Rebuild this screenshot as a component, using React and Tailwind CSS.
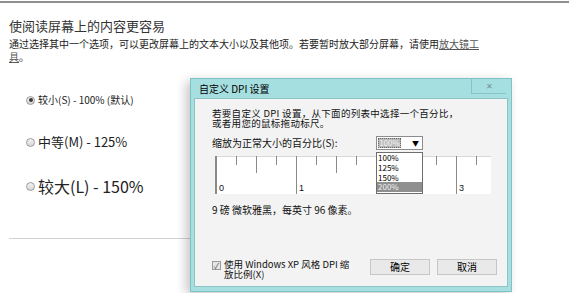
function Radio({ checked }) {
  return (
    <span className="flex h-[9px] w-[9px] shrink-0 items-center justify-center rounded-full border border-[#9a9a9a] bg-gradient-to-b from-[#f4f4f4] to-[#d6d6d6]">
      {checked && <span className="h-[4px] w-[4px] rounded-full bg-[#3a3a3a]" />}
    </span>
  )
}

function Ruler() {
  const ticks = []
  for (let x = 0; x <= 260; x += 20) {
    const len = x % 80 === 0 ? 38 : x % 40 === 0 ? 17 : 9
    ticks.push(<line key={x} x1={x + 0.5} y1="0" x2={x + 0.5} y2={len} stroke="#8a8a8a" strokeWidth="1" />)
  }
  return (
    <svg width="275" height="38" className="block">
      <rect x="0" y="0" width="275" height="38" fill="#ffffff" />
      <line x1="0" y1="0.5" x2="275" y2="0.5" stroke="#d8d8d8" />
      {ticks}
      <text x="3" y="35" fontSize="9" fill="#111" fontFamily="Liberation Sans, sans-serif">0</text>
      <text x="83" y="35" fontSize="9" fill="#111" fontFamily="Liberation Sans, sans-serif">1</text>
      <text x="243" y="35" fontSize="9" fill="#111" fontFamily="Liberation Sans, sans-serif">3</text>
    </svg>
  )
}

function DpiDialog() {
  return (
    <div className="absolute left-[190px] top-[78px] flex h-[214px] w-[322px] flex-col border border-[#7fc2c4] bg-[#a6dfe0] px-[3px] pb-[4px] shadow-[-4px_3px_10px_rgba(0,0,0,0.22)]">
      <div className="relative flex h-[19px] items-center pl-[5px] text-[10px] leading-[12px] text-black">
        自定义 DPI 设置
        <div className="absolute right-[2px] top-[-1px] flex h-[16px] w-[35px] items-center justify-center border-b border-l border-[#86c5c7] text-[8px] text-[#6f9394]">
          ✕
        </div>
      </div>
      <div className="relative flex flex-1 flex-col border border-[#8cc4c6] bg-[#f3f3f3] text-[10px] text-[#111]">
        <p className="pl-[17px] pt-[9px] text-[9.5px] leading-[10px] tracking-[0.3px]">
          若要自定义 DPI 设置，从下面的列表中选择一个百分比，
          <br />
          或者用您的鼠标拖动标尺。
        </p>
        <div className="mt-[8px] flex h-[14px] items-center pl-[17px]">
          <span className="w-[164px] leading-[12px]">缩放为正常大小的百分比(S):</span>
          <div className="flex h-[14px] w-[47px] items-center border border-[#8c8c8c] bg-white">
            <span className="ml-[1px] flex h-[10px] w-[23px] items-center justify-center border border-dotted border-[#666] bg-[#b9b9b9] text-[8px] leading-none text-[#f6f6f6]">
              100%
            </span>
            <span className="ml-auto mr-[3px] text-[7px] leading-none text-black">▼</span>
          </div>
        </div>
        <div className="ml-[20px] mt-[6px] border-l border-[#8a8a8a]">
          <Ruler />
        </div>
        <p className="mt-[10px] pl-[17px] leading-[12px]">9 磅 微软雅黑，每英寸 96 像素。</p>
        <div className="mt-auto flex items-start pb-[7px] pl-[17px] pr-[10px]">
          <span className="mt-[2px] flex h-[9px] w-[9px] shrink-0 items-center justify-center border border-[#9a9a9a] bg-[#e6e6e6] text-[8px] leading-none text-[#555]">
            ✓
          </span>
          <span className="ml-[3px] text-[9.5px] leading-[10px]">
            使用 Windows XP 风格 DPI 缩
            <br />
            放比例(X)
          </span>
          <div className="ml-auto flex gap-[7px]">
            <button className="flex h-[16px] w-[60px] items-center justify-center border border-[#c6c6c6] bg-[#e9e9e9] text-[10px] leading-none text-black">
              确定
            </button>
            <button className="flex h-[16px] w-[60px] items-center justify-center border border-[#c6c6c6] bg-[#e9e9e9] text-[10px] leading-none text-black">
              取消
            </button>
          </div>
        </div>
        <div className="absolute left-[181px] top-[53px] w-[47px] border border-[#6e6e6e] bg-white text-[8px] leading-[10px] text-black">
          <div className="h-[10px] pl-[1px]">100%</div>
          <div className="h-[10px] pl-[1px]">125%</div>
          <div className="h-[9px] pl-[1px] leading-[9px]">150%</div>
          <div className="mb-[1px] h-[10px] bg-[#8f8f8f] pl-[1px] text-[#f2f2f2]">200%</div>
        </div>
      </div>
    </div>
  )
}

export default function App() {
  return (
    <div className="relative h-[293px] w-[569px] overflow-hidden bg-white font-['Noto_Sans_CJK_SC',sans-serif]">
      <div className="mt-[1px] h-[2px] bg-[#8f8f8f]" />
      <div className="pl-[9px] pt-[14px]">
        <h1 className="text-[13px] font-normal leading-[18px] text-[#333]">使阅读屏幕上的内容更容易</h1>
        <p className="mt-[2px] whitespace-nowrap text-[10px] leading-[13px] text-[#222]">
          通过选择其中一个选项，可以更改屏幕上的文本大小以及其他项。若要暂时放大部分屏幕，请使用
          <span className="text-[#555] underline">放大镜工</span>
          <br />
          <span className="text-[#555] underline">具</span>。
        </p>
        <div className="flex flex-col pl-[17px]">
          <div className="mt-[27px] flex h-[20px] items-center gap-[3px]">
            <Radio checked />
            <span className="text-[10px] leading-[14px] text-[#222]">较小(S) - 100% (默认)</span>
          </div>
          <div className="mt-[22px] flex h-[20px] items-center gap-[3px]">
            <Radio />
            <span className="text-[13px] leading-[18px] text-[#222]">中等(M) - 125%</span>
          </div>
          <div className="mt-[22px] flex h-[24px] items-center gap-[3px]">
            <Radio />
            <span className="text-[16px] leading-[22px] text-[#222]">较大(L) - 150%</span>
          </div>
        </div>
        <div className="mt-[40px] h-px w-[200px] bg-[#d2d2d2]" />
      </div>
      <DpiDialog />
    </div>
  )
}
